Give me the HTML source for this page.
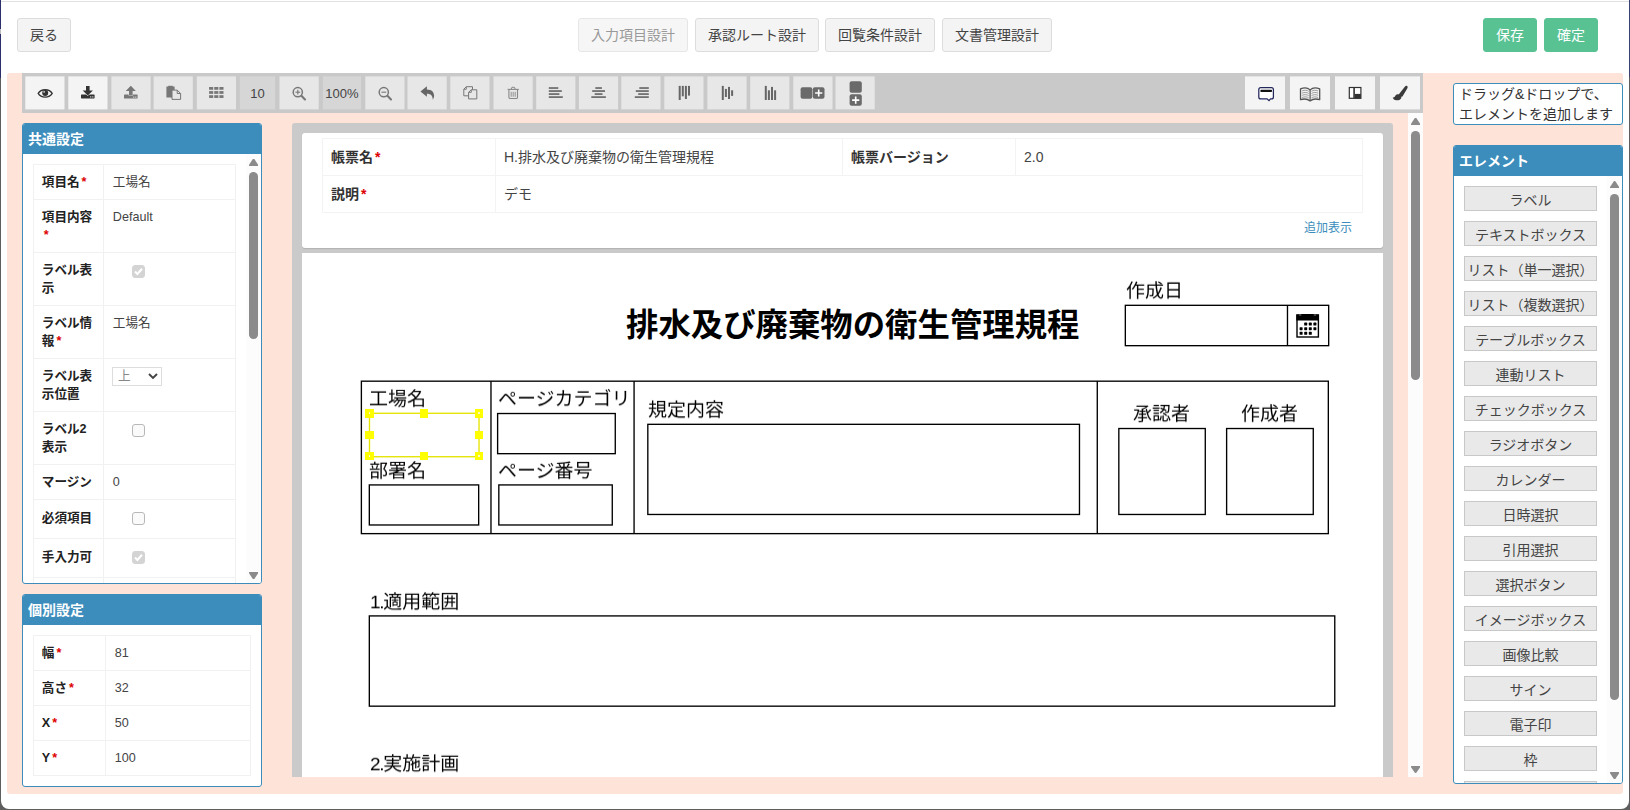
<!DOCTYPE html>
<html lang="ja">
<head>
<meta charset="utf-8">
<title>入力項目設計</title>
<style>
*{box-sizing:border-box;}
html,body{margin:0;padding:0;}
body{width:1630px;height:810px;overflow:hidden;background:#5e5e5e;position:relative;
 font-family:"Liberation Sans","Noto Sans CJK JP",sans-serif;font-size:14px;line-height:20px;color:#444;}
.abs{position:absolute;}
/* window frame */
#frame{position:absolute;left:0;top:0;width:1630px;height:810px;pointer-events:none;z-index:50;box-shadow:inset 0 0 0 0 #555;}
#page{position:absolute;left:1px;top:0;width:1628px;height:809px;background:#fff;border-radius:0 0 8px 8px;}
#navy{position:absolute;left:0;top:0;width:1px;height:78px;background:#2b2f6b;z-index:51;}
#navy i{position:absolute;left:0;top:29px;width:1px;height:5px;background:#bbb;}
#topline{position:absolute;left:1px;top:1px;width:1628px;height:1px;background:#e2e2e2;}
/* top buttons */
.btn{position:absolute;top:18px;height:34px;border:1px solid #ddd;border-radius:3px;background:#f4f4f4;color:#444;font-size:14px;line-height:20px;padding:6px 0;text-align:center;}
.btn.dis{color:#999;background:#f6f6f6;border-color:#e6e6e6;}
.btn.grn{background:#58c293;border-color:#58c293;color:#fff;}
/* pink area */
#pink{position:absolute;left:7px;top:73px;width:1616px;height:720.8px;background:#fde3d8;border-radius:3px;}
/* toolbar */
#tb{position:absolute;left:22px;top:73px;width:1401px;height:40px;background:#c9c9c9;}
.tbtn{position:absolute;top:3px;width:40px;height:34px;background:#e7e7e7;text-align:center;color:#555;font-size:13px;line-height:34px;}
.tbtn.on{background:#f4f4f4;}
.tbtn.dk{background:#d6d6d6;color:#444;}
.tbtn svg{position:absolute;left:0;top:0;width:40px;height:34px;}
/* panels */
.box{position:absolute;background:#fff;border:1px solid #3c8dbc;border-radius:3px;overflow:hidden;}
.box .hd{position:absolute;left:-1px;top:-1px;right:-1px;height:31px;background:#3c8dbc;color:#fff;font-weight:bold;font-size:14px;line-height:33px;padding-left:6px;}
table{border-collapse:collapse;}
.pt{position:absolute;font-size:12.6px;line-height:18px;color:#444;}
.pt td{border:1px solid #f1f1f1;vertical-align:top;padding:8px;}
.pt td.l{font-weight:bold;color:#222;padding-left:8px;}
.pt td+td{padding-left:9px;}
.req{color:#d00;font-weight:bold;margin-left:2px;}
.sb{position:absolute;background:#fcfcfc;}
.sb .th{position:absolute;background:#8b8b8b;border-radius:4.4px;}
.sb .up,.sb .dn{position:absolute;width:9.4px;height:7.2px;background:#8b8b8b;}
.sb .up{clip-path:polygon(50% 0,58% 4%,100% 86%,97% 100%,3% 100%,0 86%,42% 4%);}
.sb .dn{clip-path:polygon(50% 100%,58% 96%,100% 14%,97% 0,3% 0,0 14%,42% 96%);}
.cb{position:absolute;width:13px;height:13px;border:1px solid #b8b8b8;border-radius:3px;background:#fafafa;}
.cb.ck{background:#d4d4d4;border-color:#d4d4d4;}

.eb{position:absolute;left:10px;width:133px;height:25px;border:1px solid #c8c8c8;background:#e9e9e9;color:#444;font-size:14px;line-height:26.4px;text-align:center;white-space:nowrap;overflow:hidden;}
.r{position:absolute;border:1.3px solid #000;background:#fff;}
.lb{position:absolute;will-change:transform;transform:scaleY(0.965);transform-origin:0 100%;font-size:19px;line-height:28px;color:#000;white-space:nowrap;}
.hdl{position:absolute;width:8.3px;height:8.3px;background:#ffff00;z-index:3;}
.hdl i{position:absolute;left:3.2px;top:3.2px;width:1.9px;height:1.9px;background:#fff;border-radius:1px;}
.ft{font-size:14px;line-height:20px;color:#444;}
.ft td{border:1px solid #f3f3f3;padding:8px 8px;vertical-align:top;}
.ft td.l{font-weight:bold;color:#333;}
</style>
</head>
<body>
<div id="page"></div>
<div id="topline"></div>
<div id="navy"><i></i></div>
<div class="abs" style="left:1629px;top:0;width:1px;height:77px;background:#3a4472;z-index:51;"></div>

<!-- top buttons -->
<div class="btn" style="left:17px;width:54px;">戻る</div>
<div class="btn dis" style="left:578px;width:110px;">入力項目設計</div>
<div class="btn" style="left:695px;width:124px;">承認ルート設計</div>
<div class="btn" style="left:825px;width:110px;">回覧条件設計</div>
<div class="btn" style="left:942px;width:110px;">文書管理設計</div>
<div class="btn grn" style="left:1483px;width:54px;">保存</div>
<div class="btn grn" style="left:1544px;width:54px;">確定</div>

<div id="pink"></div>

<!-- TOOLBAR -->
<!--TBSTART-->
<svg class="abs" style="left:22px;top:73px;" width="1401" height="40" viewBox="22 73 1401 40">
<rect x="22" y="73" width="1401" height="40" fill="#c9c9c9"/>
<rect x="25.3" y="76.4" width="39.2" height="33.0" fill="#f4f4f4"/>
<rect x="68.3" y="76.4" width="39.2" height="33.0" fill="#f4f4f4"/>
<rect x="111.4" y="76.4" width="39.2" height="33.0" fill="#e7e7e7"/>
<rect x="153.6" y="76.4" width="39.2" height="33.0" fill="#e7e7e7"/>
<rect x="196.8" y="76.4" width="39.2" height="33.0" fill="#e7e7e7"/>
<rect x="239.8" y="76.4" width="35.3" height="33.0" fill="#d6d6d6"/>
<rect x="279.5" y="76.4" width="39.2" height="33.0" fill="#e7e7e7"/>
<rect x="322.8" y="76.4" width="38.3" height="33.0" fill="#d6d6d6"/>
<rect x="365.3" y="76.4" width="39.2" height="33.0" fill="#e7e7e7"/>
<rect x="407.5" y="76.4" width="39.2" height="33.0" fill="#e7e7e7"/>
<rect x="450.3" y="76.4" width="39.2" height="33.0" fill="#e7e7e7"/>
<rect x="493.5" y="76.4" width="39.2" height="33.0" fill="#e7e7e7"/>
<rect x="536.2" y="76.4" width="39.2" height="33.0" fill="#e7e7e7"/>
<rect x="578.9" y="76.4" width="39.2" height="33.0" fill="#e7e7e7"/>
<rect x="621.3" y="76.4" width="39.2" height="33.0" fill="#e7e7e7"/>
<rect x="664.3" y="76.4" width="39.2" height="33.0" fill="#e7e7e7"/>
<rect x="707.4" y="76.4" width="39.2" height="33.0" fill="#e7e7e7"/>
<rect x="750.2" y="76.4" width="39.2" height="33.0" fill="#e7e7e7"/>
<rect x="793.3" y="76.4" width="39.2" height="33.0" fill="#e7e7e7"/>
<rect x="835.5" y="76.4" width="39.2" height="33.0" fill="#e7e7e7"/>
<rect x="1245" y="76.4" width="40" height="33.0" fill="#f4f4f4"/>
<rect x="1290" y="76.4" width="40" height="33.0" fill="#f4f4f4"/>
<rect x="1335" y="76.4" width="40" height="33.0" fill="#f4f4f4"/>
<rect x="1380" y="76.4" width="40" height="33.0" fill="#f4f4f4"/>
<g transform="translate(45.2,93.4)"><path d="M-7,0 C-4.2,-4.9 4.2,-4.9 7,0 C4.2,4.9 -4.2,4.9 -7,0 Z" fill="none" stroke="#333" stroke-width="1.3"/><circle cx="0" cy="-0.3" r="3" fill="#333"/><circle cx="-1.1" cy="-1.5" r="0.8" fill="#f4f4f4"/></g>
<g transform="translate(87.8,92.2)"><rect x="-6.8" y="2.2" width="13.6" height="4" rx="0.6" fill="#333"/><path d="M-1.8,-6.2 h3.6 v4.5 h3.3 l-5.1,5.1 l-5.1,-5.1 h3.3 z" fill="#333" stroke="#f4f4f4" stroke-width="1" paint-order="stroke"/><rect x="2.3" y="4.2" width="1.2" height="1" fill="#f4f4f4"/><rect x="4.4" y="4.2" width="1.2" height="1" fill="#f4f4f4"/></g>
<g transform="translate(130.8,92.4)"><rect x="-6.8" y="2.2" width="13.6" height="4" rx="0.6" fill="#777"/><path d="M-1.8,3 h3.6 v-4.5 h3.3 l-5.1,-5.1 l-5.1,5.1 h3.3 z" fill="#777" stroke="#e7e7e7" stroke-width="1" paint-order="stroke"/><rect x="2.3" y="4.2" width="1.2" height="1" fill="#e7e7e7"/><rect x="4.4" y="4.2" width="1.2" height="1" fill="#e7e7e7"/></g>
<g transform="translate(173.6,92.7)"><path d="M-7.2,-6.2 h8.2 v11 h-8.2 z" fill="#777"/><rect x="-5.4" y="-6.9" width="4.6" height="1.4" fill="#777"/><path d="M-1.6,-2.6 h5.2 l3.4,3.4 v5.9 h-8.6 z" fill="#e7e7e7" stroke="#777" stroke-width="1"/><path d="M3.6,-2.6 v3.4 h3.4" fill="none" stroke="#777" stroke-width="1"/></g>
<g transform="translate(216.3,92.5)"><rect x="-7.2" y="-5.5" width="4.1" height="2.75" fill="#777"/><rect x="-2.05" y="-5.5" width="4.1" height="2.75" fill="#777"/><rect x="3.1000000000000005" y="-5.5" width="4.1" height="2.75" fill="#777"/><rect x="-7.2" y="-1.4000000000000004" width="4.1" height="2.75" fill="#777"/><rect x="-2.05" y="-1.4000000000000004" width="4.1" height="2.75" fill="#777"/><rect x="3.1000000000000005" y="-1.4000000000000004" width="4.1" height="2.75" fill="#777"/><rect x="-7.2" y="2.6999999999999993" width="4.1" height="2.75" fill="#777"/><rect x="-2.05" y="2.6999999999999993" width="4.1" height="2.75" fill="#777"/><rect x="3.1000000000000005" y="2.6999999999999993" width="4.1" height="2.75" fill="#777"/></g>
<text x="257.6" y="97.9" font-size="13" text-anchor="middle" fill="#444" font-family="Liberation Sans, Noto Sans CJK JP, sans-serif">10</text>
<g transform="translate(299,93.4)"><circle cx="-1.2" cy="-1.2" r="4.6" fill="none" stroke="#777" stroke-width="1.5"/><path d="M2.4,2.4 L6,6" stroke="#777" stroke-width="2.1" stroke-linecap="round"/><path d="M-3.6,-1.2 h4.8" stroke="#777" stroke-width="1.1"/><path d="M-1.2,-3.6 v4.8" stroke="#777" stroke-width="1.1"/></g>
<text x="341.9" y="97.9" font-size="13" text-anchor="middle" fill="#444" font-family="Liberation Sans, Noto Sans CJK JP, sans-serif">100%</text>
<g transform="translate(385,93.4)"><circle cx="-1.2" cy="-1.2" r="4.6" fill="none" stroke="#777" stroke-width="1.5"/><path d="M2.4,2.4 L6,6" stroke="#777" stroke-width="2.1" stroke-linecap="round"/><path d="M-3.6,-1.2 h4.8" stroke="#777" stroke-width="1.1"/></g>
<g transform="translate(427.3,92.8)"><path d="M-6.8,-1.3 L-0.4,-6.6 L-0.4,-3.4 C4.6,-3.4 6.8,-0.6 6.8,3 C6.8,4.8 6,6.2 5.4,6.9 C5.6,3 3.6,0.9 -0.4,0.9 L-0.4,4 Z" fill="#666"/></g>
<g transform="translate(470.2,92.8)"><path d="M-3.9,-6.1 h6.2 v9.1 h-8.7 v-6.6 z" fill="none" stroke="#777" stroke-width="1"/><path d="M-3.9,-6.1 v2.6 h-2.5" fill="none" stroke="#777" stroke-width="0.9"/><path d="M1.1,-3 h5.5 v9.1 h-8.2 v-6.6 z" fill="#e7e7e7" stroke="#777" stroke-width="1"/><path d="M1.1,-3 v2.6 h-2.6" fill="none" stroke="#777" stroke-width="0.9"/></g>
<g transform="translate(513.2,92.8)"><path d="M-5.6,-3.4 h11.2" stroke="#888" stroke-width="1.1"/><path d="M-2,-3.6 l0.7,-1.9 h2.6 l0.7,1.9" fill="none" stroke="#888" stroke-width="1"/><path d="M-4.3,-3.2 v7.6 q0,1.3 1.3,1.3 h6 q1.3,0 1.3,-1.3 v-7.6" fill="none" stroke="#888" stroke-width="1.1"/><path d="M-2,-1 v5 M0,-1 v5 M2,-1 v5" stroke="#888" stroke-width="0.9"/></g>
<rect x="548.8" y="87.3" width="9.5" height="1.45" fill="#555"/><rect x="548.8" y="90.32" width="13" height="1.45" fill="#555"/><rect x="548.8" y="93.34" width="10.6" height="1.45" fill="#555"/><rect x="548.8" y="96.36" width="14" height="1.45" fill="#555"/>
<rect x="595.3000000000001" y="87.3" width="6.6" height="1.45" fill="#555"/><rect x="592.2" y="90.32" width="12.8" height="1.45" fill="#555"/><rect x="594.7" y="93.34" width="7.8" height="1.45" fill="#555"/><rect x="591.3000000000001" y="96.36" width="14.6" height="1.45" fill="#555"/>
<rect x="639.3" y="87.3" width="9.5" height="1.45" fill="#555"/><rect x="635.8" y="90.32" width="13" height="1.45" fill="#555"/><rect x="638.1999999999999" y="93.34" width="10.6" height="1.45" fill="#555"/><rect x="634.8" y="96.36" width="14" height="1.45" fill="#555"/>
<rect x="678.7" y="85.9" width="2" height="14.099999999999994" fill="#666"/><rect x="681.8000000000001" y="85.9" width="2" height="10.399999999999991" fill="#666"/><rect x="684.9000000000001" y="85.9" width="2" height="13.099999999999994" fill="#666"/><rect x="688.0" y="85.9" width="2" height="9.699999999999989" fill="#666"/>
<rect x="721.8" y="85.9" width="2" height="14.099999999999994" fill="#666"/><rect x="724.9" y="88.9" width="2" height="8.099999999999994" fill="#666"/><rect x="728.0" y="86.9" width="2" height="12.099999999999994" fill="#666"/><rect x="731.0999999999999" y="90.3" width="2" height="5.6000000000000085" fill="#666"/>
<rect x="764.8" y="85.9" width="2" height="14.099999999999994" fill="#666"/><rect x="767.9" y="90.3" width="2" height="9.700000000000003" fill="#666"/><rect x="771.0" y="86.9" width="2" height="13.099999999999994" fill="#666"/><rect x="774.0999999999999" y="90.3" width="2" height="9.700000000000003" fill="#666"/>
<g transform="translate(812.5,93)"><rect x="-11.9" y="-5.8" width="11.7" height="11.6" rx="2" fill="#6a6a6a"/><rect x="0.3" y="-5.8" width="11.7" height="11.6" rx="2" fill="#6a6a6a"/><path d="M2.6,0 h7.2 M6.2,-3.6 v7.2" stroke="#fff" stroke-width="1.6"/></g>
<g transform="translate(855.7,93.5)"><rect x="-6.1" y="-12.3" width="12.2" height="11.5" rx="2" fill="#6a6a6a"/><rect x="-6.1" y="0.8" width="12.2" height="11.5" rx="2" fill="#6a6a6a"/><path d="M-3.6,6.6 h7.2 M0,3 v7.2" stroke="#fff" stroke-width="1.6"/></g>
<g transform="translate(1266.1,93.5)"><path d="M-5.3,-5.8 h10.6 q2,0 2,2 v7.2 q0,2 -2,2 h-0.9 l-1.5,1.7 l-1.9,-1.7 h-6.3 q-2,0 -2,-2 v-7.2 q0,-2 2,-2 z" fill="#fff" stroke="#23275c" stroke-width="1.25"/><rect x="-5.7" y="-3.7" width="11.6" height="2.1" rx="0.7" fill="#111"/></g>
<g transform="translate(1310.1,94.5)"><path d="M0,-4.6 C-2.5,-7 -6.5,-7 -9.6,-5.6 V5.2 C-6.5,4.2 -2.5,4.4 0,6.4 C2.5,4.4 6.5,4.2 9.6,5.2 V-5.6 C6.5,-7 2.5,-7 0,-4.6 Z" fill="#f4f4f4" stroke="#555" stroke-width="1.3" stroke-linejoin="round"/><path d="M0,-4.6 V6.2" stroke="#555" stroke-width="1.2"/><path d="M-8,-3.6 C-5.5,-4.6 -3,-4.4 -1.4,-3.2 M-8,-1.4 C-5.5,-2.4 -3,-2.2 -1.4,-1 M-8,0.8 C-5.5,-0.2 -3,0 -1.4,1.2 M-8,3 C-5.5,2 -3,2.2 -1.4,3.4 M8,-3.6 C5.5,-4.6 3,-4.4 1.4,-3.2 M8,-1.4 C5.5,-2.4 3,-2.2 1.4,-1 M8,0.8 C5.5,-0.2 3,0 1.4,1.2 M8,3 C5.5,2 3,2.2 1.4,3.4" fill="none" stroke="#777" stroke-width="0.7"/></g>
<g transform="translate(1355.1,92.9)"><rect x="-5.8" y="-5.4" width="11.6" height="10.8" fill="#fff" stroke="#333" stroke-width="1.2"/><rect x="-0.2" y="1" width="6" height="4.6" fill="#333"/><path d="M-1,-5.4 v10.8" stroke="#333" stroke-width="1.6"/></g>
<g transform="translate(1400.2,93)"><path d="M6.9,-7.1 C7.8,-6.4 7.5,-5.2 6.9,-4.2 L2.4,3.2 C1.8,4 0.6,3.8 -0.3,3.1 C-1.2,2.4 -1.6,1.5 -0.9,0.7 L4.6,-6.3 C5.2,-7.1 6.2,-7.6 6.9,-7.1 Z" fill="#3a3a3a"/><path d="M-2,1.3 C-0.4,1.5 1,3 1.2,4.4 C0.8,6.6 -1.8,7.4 -3.9,7.2 C-5.6,7 -7.2,6 -7.4,4.4 C-6,4.6 -5.4,3.8 -4.9,2.8 C-4.3,1.8 -3.3,1.1 -2,1.3 Z" fill="#3a3a3a"/></g>
</svg>
<!--TBEND-->

<!-- LEFT PANELS -->
<!--LS--><div class="box" style="left:22px;top:123px;width:240px;height:461px;">
<div class="hd">共通設定</div>
<table class="pt" style="left:9.8px;top:40.2px;width:203px;"><tr style="height:35px"><td class="l" style="width:70px">項目名<span class="req">*</span></td><td>工場名</td></tr><tr style="height:53px"><td class="l" style="width:70px">項目内容<br><span class="req">*</span></td><td>Default</td></tr><tr style="height:53px"><td class="l" style="width:70px">ラベル表<br>示</td><td></td></tr><tr style="height:53px"><td class="l" style="width:70px">ラベル情<br>報<span class="req">*</span></td><td>工場名</td></tr><tr style="height:53px"><td class="l" style="width:70px">ラベル表<br>示位置</td><td></td></tr><tr style="height:53px"><td class="l" style="width:70px">ラベル2<br>表示</td><td></td></tr><tr style="height:35px"><td class="l" style="width:70px">マージン</td><td>0</td></tr><tr style="height:39px"><td class="l" style="width:70px;padding-top:9.2px">必須項目</td><td></td></tr><tr style="height:39px"><td class="l" style="width:70px;padding-top:9.2px">手入力可</td><td></td></tr><tr style="height:30px"><td class="l" style="width:70px">&nbsp;</td><td></td></tr></table>
<div class="sb" style="left:223px;top:30px;width:15px;height:429px;"><div class="up" style="left:2.9px;top:4.8px;"></div><div class="th" style="left:3.1px;top:17.9px;width:8.8px;height:167px;"></div><div class="dn" style="left:2.9px;top:418.0px;"></div></div>
<div class="cb ck" style="left:109px;top:141px;"><svg width="13" height="13" viewBox="0 0 13 13" style="position:absolute;left:-1px;top:-1px"><path d="M3,6.6 L5.4,9 L10,3.8" fill="none" stroke="#fff" stroke-width="2.1"/></svg></div><div class="cb" style="left:109px;top:300px;"></div><div class="cb" style="left:109px;top:388px;"></div><div class="cb ck" style="left:109px;top:427px;"><svg width="13" height="13" viewBox="0 0 13 13" style="position:absolute;left:-1px;top:-1px"><path d="M3,6.6 L5.4,9 L10,3.8" fill="none" stroke="#fff" stroke-width="2.1"/></svg></div>
<div class="abs" style="left:89px;top:243px;width:50px;height:19px;border:1px solid #ddd;background:#fff;font-size:12.6px;line-height:17px;color:#888;padding-left:5px;">上<svg class="abs" style="right:3px;top:5px" width="10" height="7" viewBox="0 0 10 7"><path d="M1,1 L5,5 L9,1" fill="none" stroke="#444" stroke-width="1.9"/></svg></div>
</div>
<div class="box" style="left:22px;top:594px;width:240px;height:193px;">
<div class="hd">個別設定</div>
<table class="pt" style="left:9.8px;top:40.2px;width:218.4px;"><tr style="height:35px"><td class="l" style="width:72px">幅<span class="req">*</span></td><td>81</td></tr><tr style="height:35px"><td class="l" style="width:72px">高さ<span class="req">*</span></td><td>32</td></tr><tr style="height:35px"><td class="l" style="width:72px">X<span class="req">*</span></td><td>50</td></tr><tr style="height:35px"><td class="l" style="width:72px">Y<span class="req">*</span></td><td>100</td></tr></table>
</div><!--LE-->

<!-- CENTER -->
<!--CS--><div class="abs" style="left:292px;top:123px;width:1101px;height:654px;background:#cacaca;border-radius:3px 3px 0 0;overflow:hidden;">
<div class="abs" style="left:10px;top:10px;width:1081px;height:115px;background:#fff;border-radius:3px;box-shadow:0 1px 1px rgba(0,0,0,.12);"></div>
<div class="abs" style="left:10px;top:130px;width:1081px;height:560px;background:#fff;"></div>
</div>
<table class="ft abs" style="left:322px;top:138px;width:1041px;">
<tr><td class="l" style="width:173px">帳票名<span class="req">*</span></td><td style="width:347px">H.排水及び廃棄物の衛生管理規程</td><td class="l" style="width:173px">帳票バージョン</td><td>2.0</td></tr>
<tr><td class="l">説明<span class="req">*</span></td><td colspan="3">デモ</td></tr>
</table>
<svg class="abs" style="left:302px;top:253px;" width="1081" height="523" viewBox="302 253 1081 523"><rect x="1125.33" y="305.32" width="203.35" height="40.35" fill="#fff" stroke="#000" stroke-width="1.35"/><rect x="1286.80" y="305" width="1.35" height="41" fill="#000"/><rect x="361.38" y="381.18" width="966.95" height="152.45" fill="#fff" stroke="#000" stroke-width="1.35"/><rect x="490.30" y="381" width="1.35" height="153" fill="#000"/><rect x="633.40" y="381" width="1.35" height="153" fill="#000"/><rect x="1096.60" y="381" width="1.35" height="153" fill="#000"/><rect x="369.48" y="413.28" width="109.55" height="43.45" fill="#fff" stroke="#e4e400" stroke-width="1.35"/><rect x="369.32" y="484.93" width="109.35" height="40.05" fill="#fff" stroke="#000" stroke-width="1.35"/><rect x="497.62" y="413.52" width="117.65" height="40.15" fill="#fff" stroke="#000" stroke-width="1.35"/><rect x="498.82" y="484.93" width="113.45" height="40.05" fill="#fff" stroke="#000" stroke-width="1.35"/><rect x="647.82" y="424.32" width="431.65" height="90.15" fill="#fff" stroke="#000" stroke-width="1.35"/><rect x="1118.83" y="428.52" width="86.45" height="85.95" fill="#fff" stroke="#000" stroke-width="1.35"/><rect x="1226.62" y="428.52" width="86.65" height="85.95" fill="#fff" stroke="#000" stroke-width="1.35"/><rect x="369.32" y="615.92" width="965.45" height="90.25" fill="#fff" stroke="#000" stroke-width="1.35"/></svg>
<div class="abs" style="left:1304px;top:219px;font-size:12px;line-height:18px;color:#3c8dbc;">追加表示</div>
<div class="abs" style="left:626px;top:300.8px;font-size:32.4px;line-height:48px;font-weight:bold;color:#000;white-space:nowrap;transform:scaleY(0.97);transform-origin:0 50%;">排水及び廃棄物の衛生管理規程</div>
<div class="lb" style="left:1126px;top:277px;">作成日</div>


<svg class="abs" style="left:1296px;top:313px;" width="24" height="25" viewBox="0 0 24 25"><path d="M0.3,1.5 h2.6 v1.2 h2.4 v-1.6 h12.4 v1.6 h2.4 v-1.2 h2.6 v6 h-22.4 z" fill="#000"/><rect x="1" y="2" width="21.4" height="22" fill="none" stroke="#000" stroke-width="1.4"/>
<g fill="#000"><rect x="8.2" y="9.6" width="3" height="3" rx=".6"/><rect x="12.8" y="9.6" width="3" height="3" rx=".6"/><rect x="17.4" y="9.6" width="3" height="3" rx=".6"/>
<rect x="3.6" y="14.2" width="3" height="3" rx=".6"/><rect x="8.2" y="14.2" width="3" height="3" rx=".6"/><rect x="12.8" y="14.2" width="3" height="3" rx=".6"/><rect x="17.4" y="14.2" width="3" height="3" rx=".6"/>
<rect x="3.6" y="18.8" width="3" height="3" rx=".6"/><rect x="8.2" y="18.8" width="3" height="3" rx=".6"/><rect x="12.8" y="18.8" width="3" height="3" rx=".6"/></g></svg>


<div class="lb" style="left:369.4px;top:384.8px;">工場名</div>

<div class="hdl" style="left:365.35px;top:409.25px;"><i></i></div><div class="hdl" style="left:420.15000000000003px;top:409.25px;"></div><div class="hdl" style="left:474.85px;top:409.25px;"><i></i></div><div class="hdl" style="left:365.35px;top:430.55px;"></div><div class="hdl" style="left:474.85px;top:430.55px;"></div><div class="hdl" style="left:365.35px;top:451.85px;"><i></i></div><div class="hdl" style="left:420.15000000000003px;top:451.85px;"></div><div class="hdl" style="left:474.85px;top:451.85px;"><i></i></div>
<div class="lb" style="left:369.4px;top:456.8px;">部署名</div>

<div class="lb" style="left:498.1px;top:384.7px;">ページカテゴリ</div>

<div class="lb" style="left:498.1px;top:457.2px;">ページ番号</div>

<div class="lb" style="left:647.7px;top:396px;">規定内容</div>

<div class="lb" style="left:1133.4px;top:400px;">承認者</div>

<div class="lb" style="left:1241.4px;top:400px;">作成者</div>

<div class="lb" style="left:370px;top:588px;"><span style="letter-spacing:-1.3px">1.</span>適用範囲</div>

<div class="lb" style="left:370px;top:750px;"><span style="letter-spacing:-1.3px">2.</span>実施計画</div>
<div class="abs" style="left:292px;top:776.9px;width:1131px;height:16.1px;background:#fde3d8;"></div>
<div class="sb" style="left:1408px;top:113px;width:15px;height:663.9px;"><div class="up" style="left:2.9px;top:4.8px;"></div><div class="th" style="left:3.1px;top:17.9px;width:8.8px;height:249px;"></div><div class="dn" style="left:2.9px;top:652.9px;"></div></div>
<!--CE-->

<!-- RIGHT -->
<!--RS--><div class="abs" style="left:1453px;top:83px;width:170px;height:42px;border:1px solid #3c8dbc;border-radius:3px;background:#fff;font-size:14px;line-height:20px;color:#333;padding:0 0 0 5px;white-space:nowrap;overflow:hidden;">ドラッグ&amp;ドロップで、<br>エレメントを追加します</div>
<div class="box" style="left:1453px;top:145px;width:170px;height:639px;">
<div class="hd">エレメント</div>
<div class="eb" style="top:40px;">ラベル</div><div class="eb" style="top:75px;">テキストボックス</div><div class="eb" style="top:110px;">リスト（単一選択）</div><div class="eb" style="top:145px;">リスト（複数選択）</div><div class="eb" style="top:180px;">テーブルボックス</div><div class="eb" style="top:215px;">連動リスト</div><div class="eb" style="top:250px;">チェックボックス</div><div class="eb" style="top:285px;">ラジオボタン</div><div class="eb" style="top:320px;">カレンダー</div><div class="eb" style="top:355px;">日時選択</div><div class="eb" style="top:390px;">引用選択</div><div class="eb" style="top:425px;">選択ボタン</div><div class="eb" style="top:460px;">イメージボックス</div><div class="eb" style="top:495px;">画像比較</div><div class="eb" style="top:530px;">サイン</div><div class="eb" style="top:565px;">電子印</div><div class="eb" style="top:600px;">枠</div><div class="eb" style="top:635px;">線</div>
<div class="sb" style="left:153px;top:30.2px;width:15px;height:606.8px;"><div class="up" style="left:2.9px;top:4.8px;"></div><div class="th" style="left:3.1px;top:17.9px;width:8.8px;height:506px;"></div><div class="dn" style="left:2.9px;top:595.8px;"></div></div>
</div><!--RE-->

<div id="frame"></div>
</body>
</html>
